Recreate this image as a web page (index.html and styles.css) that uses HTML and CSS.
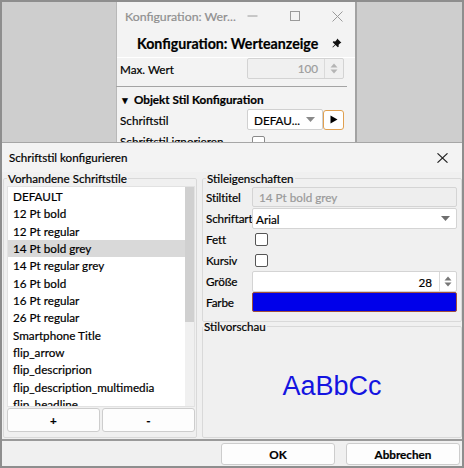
FILE: index.html
```html
<!DOCTYPE html>
<html lang="de">
<head>
<meta charset="utf-8">
<title>Schriftstil konfigurieren</title>
<link rel="stylesheet" href="styles.css">
</head>
<body>
<div class="screen">
  <div class="desk">
    <div class="win">
      <div class="win-title">
        <span class="wt-text">Konfiguration: Wer...</span>
        <span class="wctl">
          <svg width="11" height="10" viewBox="0 0 11 10"><path d="M0.5 5h10" stroke="#9a9a9a" stroke-width="1"/></svg>
          <svg width="10" height="10" viewBox="0 0 10 10"><rect x="0.5" y="0.5" width="9" height="9" fill="none" stroke="#9a9a9a"/></svg>
          <svg width="11" height="11" viewBox="0 0 11 11"><path d="M0.5 0.5l10 10M10.5 0.5l-10 10" stroke="#9a9a9a"/></svg>
        </span>
      </div>
      <div class="win-head">
        <span class="wh-text">Konfiguration: Werteanzeige</span>
        <svg class="pin" width="10" height="10" viewBox="0 0 10 10"><path d="M5.2 0.6l4.2 4.2-1.2 0.4-1.6 1.6 0.1 1.9-0.9 0.6-2.3-2.3-2.6 2.6-0.5-0.5 2.6-2.6-2.3-2.3 0.6-0.9 1.9 0.1 1.6-1.6z" fill="#111"/></svg>
      </div>
      <div class="win-body">
        <div class="prow">
          <span class="plabel">Max. Wert</span>
          <div class="spin dis"><span class="spin-val">100</span><span class="spin-btn"><svg width="8" height="11" viewBox="0 0 8 11"><path d="M4 0.5L7.5 4.5H0.5z M4 10.5L7.5 6.5H0.5z" fill="#b5b5b5"/></svg></span></div>
        </div>
        <div class="sep"></div>
        <div class="sect"><span class="tri">▼</span>Objekt Stil Konfiguration</div>
        <div class="prow">
          <span class="plabel">Schriftstil</span>
          <div class="combo small"><span>DEFAU...</span><svg width="9" height="5" viewBox="0 0 9 5"><path d="M0 0h9L4.5 5z" fill="#8a8a8a"/></svg></div>
          <button class="play"><svg width="8" height="9" viewBox="0 0 8 9"><path d="M0.5 0.5L7.5 4.5 0.5 8.5z" fill="#000"/></svg></button>
        </div>
        <div class="prow">
          <span class="plabel">Schriftstil ignorieren</span>
          <span class="chk small-chk"></span>
        </div>
      </div>
    </div>
  </div>

  <div class="dialog">
    <div class="dlg-title">
      <span>Schriftstil konfigurieren</span>
      <svg width="11" height="10" viewBox="0 0 11 10"><path d="M0.5 0.3l10 9.4M10.5 0.3l-10 9.4" stroke="#222" stroke-width="1.1"/></svg>
    </div>
    <div class="dlg-body">
      <fieldset class="grp grp-list">
        <legend>Vorhandene Schriftstile</legend>
        <div class="list">
          <div class="items">
            <div class="item">DEFAULT</div>
            <div class="item">12 Pt bold</div>
            <div class="item">12 Pt regular</div>
            <div class="item sel">14 Pt bold grey</div>
            <div class="item">14 Pt regular grey</div>
            <div class="item">16 Pt bold</div>
            <div class="item">16 Pt regular</div>
            <div class="item">26 Pt regular</div>
            <div class="item">Smartphone Title</div>
            <div class="item">flip_arrow</div>
            <div class="item">flip_descriprion</div>
            <div class="item">flip_description_multimedia</div>
            <div class="item">flip_headline</div>
          </div>
          <div class="vscroll"><div class="thumb"></div></div>
        </div>
        <div class="list-btns">
          <button class="btn">+</button>
          <button class="btn">-</button>
        </div>
      </fieldset>
      <div class="rcol">
        <fieldset class="grp grp-props">
          <legend>Stileigenschaften</legend>
          <div class="form">
            <span class="flabel">Stiltitel</span>
            <div class="field dis"><span>14 Pt bold grey</span></div>
            <span class="flabel">Schriftart</span>
            <div class="field combo-wide"><span>Arial</span><svg width="9" height="5" viewBox="0 0 9 5"><path d="M0 0h9L4.5 5z" fill="#6f6f6f"/></svg></div>
            <span class="flabel">Fett</span>
            <div class="cell"><span class="chk"></span></div>
            <span class="flabel">Kursiv</span>
            <div class="cell"><span class="chk"></span></div>
            <span class="flabel">Größe</span>
            <div class="field spin-wide"><span class="spin-val">28</span><span class="spin-btn"><svg width="8" height="11" viewBox="0 0 8 11"><path d="M4 0.5L7.5 4.5H0.5z M4 10.5L7.5 6.5H0.5z" fill="#777"/></svg></span></div>
            <span class="flabel">Farbe</span>
            <div class="color"></div>
          </div>
        </fieldset>
        <fieldset class="grp grp-prev">
          <legend>Stilvorschau</legend>
          <div class="preview">AaBbCc</div>
        </fieldset>
      </div>
    </div>
    <div class="dlg-foot">
      <button class="btn fbtn">OK</button>
      <button class="btn fbtn">Abbrechen</button>
    </div>
  </div>
</div>
</body>
</html>
```

FILE: styles.css
```css
* { box-sizing: border-box; }
html, body { margin: 0; padding: 0; }
body {
  font-family: Lato, "Noto Sans", sans-serif;
  font-size: 11.7px;
  color: #000;
  background: #cecece;
  -webkit-text-stroke: 0.2px currentColor;
}
.screen {
  width: 464px;
  height: 468px;
  border: 2px solid #8e8e8e;
  background: #cecece;
  display: flex;
  flex-direction: column;
  overflow: hidden;
}
/* ---------- background window ---------- */
.desk {
  height: 140px;
  flex: none;
  overflow: hidden;
  padding-left: 114px;
}
.win {
  width: 241px;
  height: 170px;
  background: #f3f3f3;
  border-left: 1px solid #b8b8b8;
  border-right: 2px solid #a2a2a2;
}
.win-title {
  height: 28px;
  display: flex;
  align-items: center;
  padding-left: 8px;
}
.wt-text { color: #8f8f8f; width: 122px; white-space: nowrap; font-size: 12.3px; }
.wctl { display: flex; align-items: center; gap: 32px; }
.win-head {
  height: 28px;
  display: flex;
  align-items: center;
  padding-left: 20px;
  gap: 14px;
  border-bottom: 1px solid #ffffff;
}
.wh-text { font-weight: bold; font-size: 14.2px; white-space: nowrap; }
.pin { margin-top: -2px; }
.win-body { padding: 0 11px 0 3px; }
.prow {
  height: 21px;
  display: flex;
  align-items: center;
}
.plabel { width: 127px; white-space: nowrap; flex: none; }
.spin {
  width: 97px;
  height: 21px;
  display: flex;
  border: 1px solid #d3d3d3;
  border-radius: 2px;
  background: #f0f0f0;
}
.spin .spin-val { flex: 1; text-align: right; padding-right: 6px; line-height: 19px; color: #9c9c9c; }
.spin-btn {
  width: 19px;
  display: flex;
  align-items: center;
  justify-content: center;
  border-left: 1px solid #dadada;
}
.sep { height: 1px; background: #a4a4a4; margin: 7px -3px 3px -4px; }
.sect { font-weight: bold; height: 19px; line-height: 19px; white-space: nowrap; }
.tri { font-size: 10px; margin-right: 4px; }
.combo {
  display: flex;
  align-items: center;
  justify-content: space-between;
  background: #fff;
  border: 1px solid #d0d0d0;
  border-radius: 2px;
}
.combo.small { width: 76px; height: 21px; padding: 0 7px 0 6px; }
.play {
  width: 21px;
  height: 20px;
  padding: 0;
  display: flex;
  align-items: center;
  justify-content: center;
  background: #fff;
  border: 1px solid #e0a050;
  border-radius: 3px;
}
.chk {
  display: block;
  width: 13px;
  height: 13px;
  background: #fff;
  border: 1px solid #555;
  border-radius: 2px;
}
.small-chk { margin-left: 5px; margin-top: 4px; border-color: #8a8a8a; }
/* ---------- dialog ---------- */
.dialog {
  flex: 1;
  display: flex;
  flex-direction: column;
  background: #f0f0f0;
  border-top: 1px solid #a6a6a6;
  position: relative;
}
.dlg-title {
  height: 29px;
  flex: none;
  display: flex;
  align-items: center;
  justify-content: space-between;
  padding: 0 14px 0 7px;
  font-size: 11.6px;
  background: #f3f3f3;
}
.dlg-body {
  flex: 1;
  display: flex;
  gap: 5px;
  padding: 0 0 0 1px;
  min-height: 0;
}
.grp {
  margin: 0;
  min-width: 0;
  border: 1px solid #d9d9d9;
  border-radius: 2px;
}
.grp legend { padding: 0 1px; line-height: 13px; font-size: 11.6px; }
.grp-list {
  width: 194px;
  flex: none;
  padding: 1px 1px 5px 3px;
  display: flex;
  flex-direction: column;
}
.list {
  height: 221px;
  display: flex;
  background: #fff;
  border: 1px solid #e2e2e2;
}
.items { flex: 1; overflow: hidden; padding-top: 1px; }
.item { height: 17.33px; line-height: 17.33px; padding-left: 5px; white-space: nowrap; }
.item.sel { background: #d9d9d9; }
.vscroll { width: 9px; background: #f0f0f0; }
.thumb { height: 135px; background: #d0d0d0; }
.list-btns { display: flex; gap: 2px; margin-top: 1px; }
.btn {
  font-family: inherit;
  font-size: 11.7px;
  color: #000;
  background: #fdfdfd;
  border: 1px solid #cdcdcd;
  border-radius: 3px;
  padding: 0;
  -webkit-text-stroke: 0.2px currentColor;
}
.list-btns .btn { flex: 1; height: 24px; font-weight: bold; }
.rcol { flex: 1; display: flex; flex-direction: column; min-width: 0; }
.grp-props { padding: 2px 4px 8px 3px; flex: none; }
.form {
  display: grid;
  grid-template-columns: 46px 1fr;
  grid-auto-rows: 21px;
}
.flabel { line-height: 21px; white-space: nowrap; letter-spacing: -0.15px; }
.field {
  display: flex;
  align-items: center;
  border: 1px solid #d4d4d4;
  border-radius: 2px;
  background: #fff;
}
.field.dis { background: #eeeeee; color: #9a9a9a; padding-left: 6px; height: 20px; }
.combo-wide { justify-content: space-between; padding: 0 6px 0 3px; }
.cell { display: flex; align-items: center; padding-left: 3px; }
.spin-wide .spin-val { flex: 1; text-align: right; padding-right: 7px; }
.spin-wide .spin-btn { height: 100%; width: 17px; }
.color {
  background: #0000ea;
  border: 1px solid #a0503c;
  border-radius: 2px;
  height: 20px;
}
.grp-prev { flex: 1; padding: 0; margin-top: -2px; }
.preview {
  height: 100%;
  display: flex;
  align-items: center;
  justify-content: center;
  padding-top: 2px;
  font-family: "Liberation Sans", Arial, sans-serif;
  font-size: 27px;
  color: #1414e0;
  -webkit-text-stroke: 0;
}
.dlg-foot {
  height: 28px;
  flex: none;
  border-top: 2px solid #9a9a9a;
  display: flex;
  justify-content: flex-end;
  gap: 11px;
  padding: 2px 2px 0 0;
  margin-top: 1px;
}
.fbtn { width: 114px; height: 22px; font-weight: bold; }
```
